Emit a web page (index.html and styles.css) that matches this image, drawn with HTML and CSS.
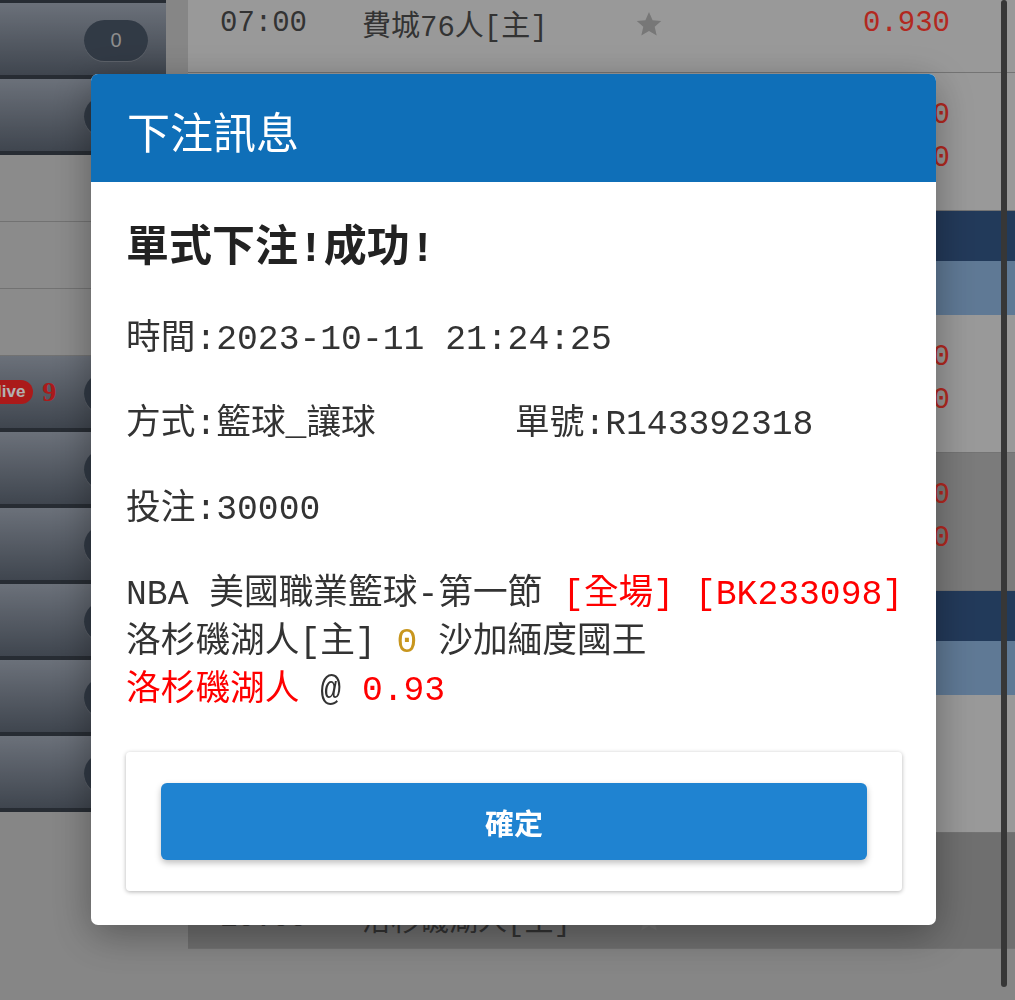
FILE: index.html
```html
<!DOCTYPE html>
<html lang="zh-Hant">
<head>
<meta charset="utf-8">
<title>下注訊息</title>
<link rel="stylesheet" href="styles.css">
</head>
<body>
<div class="page">
  <aside class="sidebar">
    <div class="side-item"><span class="count">0</span></div>
    <div class="side-item"><span class="count">0</span></div>
    <div class="side-plain"></div>
    <div class="side-plain"></div>
    <div class="side-plain"></div>
    <div class="side-item live-row"><span class="live-wrap"><span class="live">live</span><span class="live-num">9</span></span><span class="count">0</span></div>
    <div class="side-item"><span class="count">0</span></div>
    <div class="side-item"><span class="count">0</span></div>
    <div class="side-item"><span class="count">0</span></div>
    <div class="side-item"><span class="count">0</span></div>
    <div class="side-item"><span class="count">0</span></div>
  </aside>

  <main class="content">
    <div class="match partial">
      <div class="line"><span class="time">07:00</span><span class="team">費城76人[主]</span><svg class="star" viewBox="0 0 24 24"><path d="M12 1.8l3.1 6.9 7.4.7-5.6 5 1.7 7.4L12 17.9 5.4 21.8l1.7-7.4-5.6-5 7.4-.7z"/></svg><span class="odds">0.930</span></div>
    </div>
    <div class="match">
      <div class="line"><span class="time">07:00</span><span class="team">邁阿密熱火</span><svg class="star" viewBox="0 0 24 24"><path d="M12 1.8l3.1 6.9 7.4.7-5.6 5 1.7 7.4L12 17.9 5.4 21.8l1.7-7.4-5.6-5 7.4-.7z"/></svg><span class="odds">0.910</span></div>
      <div class="line"><span class="time">07:00</span><span class="team">費城76人[主]</span><svg class="star" viewBox="0 0 24 24"><path d="M12 1.8l3.1 6.9 7.4.7-5.6 5 1.7 7.4L12 17.9 5.4 21.8l1.7-7.4-5.6-5 7.4-.7z"/></svg><span class="odds">0.930</span></div>
    </div>
    <div class="league"></div>
    <div class="league-sub"></div>
    <div class="match">
      <div class="line"><span class="time">10:00</span><span class="team">沙加緬度國王</span><svg class="star" viewBox="0 0 24 24"><path d="M12 1.8l3.1 6.9 7.4.7-5.6 5 1.7 7.4L12 17.9 5.4 21.8l1.7-7.4-5.6-5 7.4-.7z"/></svg><span class="odds">0.930</span></div>
      <div class="line"><span class="time">10:00</span><span class="team">洛杉磯湖人[主]</span><svg class="star" viewBox="0 0 24 24"><path d="M12 1.8l3.1 6.9 7.4.7-5.6 5 1.7 7.4L12 17.9 5.4 21.8l1.7-7.4-5.6-5 7.4-.7z"/></svg><span class="odds">0.930</span></div>
    </div>
    <div class="match alt">
      <div class="line"><span class="time">10:00</span><span class="team">沙加緬度國王</span><svg class="star" viewBox="0 0 24 24"><path d="M12 1.8l3.1 6.9 7.4.7-5.6 5 1.7 7.4L12 17.9 5.4 21.8l1.7-7.4-5.6-5 7.4-.7z"/></svg><span class="odds">0.910</span></div>
      <div class="line"><span class="time">10:00</span><span class="team">洛杉磯湖人[主]</span><svg class="star" viewBox="0 0 24 24"><path d="M12 1.8l3.1 6.9 7.4.7-5.6 5 1.7 7.4L12 17.9 5.4 21.8l1.7-7.4-5.6-5 7.4-.7z"/></svg><span class="odds">0.930</span></div>
    </div>
    <div class="league"></div>
    <div class="league-sub"></div>
    <div class="match">
      <div class="line"><span class="time">10:00</span><span class="team">沙加緬度國王</span><svg class="star" viewBox="0 0 24 24"><path d="M12 1.8l3.1 6.9 7.4.7-5.6 5 1.7 7.4L12 17.9 5.4 21.8l1.7-7.4-5.6-5 7.4-.7z"/></svg><span class="odds"></span></div>
      <div class="line"><span class="time">10:00</span><span class="team">洛杉磯湖人[主]</span><svg class="star" viewBox="0 0 24 24"><path d="M12 1.8l3.1 6.9 7.4.7-5.6 5 1.7 7.4L12 17.9 5.4 21.8l1.7-7.4-5.6-5 7.4-.7z"/></svg><span class="odds"></span></div>
    </div>
    <div class="match sel">
      <div class="line"><span class="time">10:00</span><span class="team">沙加緬度國王</span><svg class="star" viewBox="0 0 24 24"><path d="M12 1.8l3.1 6.9 7.4.7-5.6 5 1.7 7.4L12 17.9 5.4 21.8l1.7-7.4-5.6-5 7.4-.7z"/></svg><span class="odds"></span></div>
      <div class="line"><span class="time">10:00</span><span class="team">洛杉磯湖人[主]</span><svg class="star" viewBox="0 0 24 24"><path d="M12 1.8l3.1 6.9 7.4.7-5.6 5 1.7 7.4L12 17.9 5.4 21.8l1.7-7.4-5.6-5 7.4-.7z"/></svg><span class="odds"></span></div>
    </div>
  </main>
  <div class="scrollbar"></div>
</div>

<div class="backdrop"></div>

<div class="modal">
  <div class="modal-header">下注訊息</div>
  <div class="modal-body">
    <h2 class="result-title">單式下注!成功!</h2>
    <p class="info">時間:2023-10-11 21:24:25</p>
    <p class="info"><span class="info-col">方式:籃球_讓球</span>單號:R143392318</p>
    <p class="info">投注:30000</p>
    <p class="info">NBA 美國職業籃球-第一節 <span class="red">[全場]</span> <span class="red">[BK233098]</span><br>洛杉磯湖人[主] <span class="gold">0</span> 沙加緬度國王<br><span class="red">洛杉磯湖人</span> @ <span class="red">0.93</span></p>
    <div class="action-card">
      <button class="confirm" type="button">確定</button>
    </div>
  </div>
</div>
</body>
</html>
```

FILE: styles.css
```css
* { box-sizing: border-box; }

html, body {
  margin: 0;
  padding: 0;
}

body {
  width: 1015px;
  height: 1000px;
  overflow: hidden;
  background: #c0c0c0;
  font-family: "Liberation Mono", "Noto Sans CJK TC", monospace;
}

.page {
  position: relative;
  display: flex;
  gap: 22px;
  height: 1000px;
  overflow: hidden;
}

/* ---------- sidebar ---------- */
.sidebar {
  width: 166px;
  flex: none;
  display: flex;
  flex-direction: column;
  border-top: 3px solid #39404a;
}

.side-item {
  height: 76px;
  flex: none;
  display: flex;
  align-items: center;
  justify-content: flex-end;
  padding-right: 18px;
  background: linear-gradient(#9aa2af, #5b6471);
  border-bottom: 4px solid #39404a;
  overflow: hidden;
}

.side-plain {
  height: 67px;
  flex: none;
  background: #c8c8c8;
  border-bottom: 1px solid #a4a4a4;
}

.count {
  width: 64px;
  height: 41px;
  margin-top: 3px;
  border-radius: 21px;
  background: #475363;
  color: #cbcbcb;
  font: 20px "Liberation Sans", sans-serif;
  display: flex;
  align-items: center;
  justify-content: center;
  box-shadow: 0 1px 0 rgba(255, 255, 255, 0.2);
}

.live-row { justify-content: space-between; }

.live-wrap {
  display: flex;
  align-items: center;
  gap: 9px;
  margin-left: -11px;
}

.live {
  height: 24px;
  padding: 0 8px;
  border-radius: 12px;
  background: #f52626;
  color: #fff;
  font: bold 17px/24px "Liberation Sans", sans-serif;
}

.live-num {
  color: #f52626;
  font: bold 28px "Liberation Serif", serif;
}

/* ---------- match list ---------- */
.content {
  flex: 1;
  min-width: 0;
  display: flex;
  flex-direction: column;
}

.match {
  flex: none;
  background: #dcdcdc;
  padding: 21px 0 30px;
  border-bottom: 1px solid #a6a6a6;
}

.match.partial { padding-top: 2px; padding-bottom: 27px; }
.match.alt { background: #b0b0b0; }
.match.sel { background: #a0a0a0; padding-bottom: 8px; }

.league {
  flex: none;
  height: 50px;
  background: #325381;
}

.league-sub {
  flex: none;
  height: 54px;
  background: #89aed6;
}

.line {
  display: grid;
  grid-template-columns: 142px 273px 1fr auto;
  align-items: center;
  height: 43px;
  padding: 0 65px 0 32px;
  font-size: 29px;
  color: #494949;
  white-space: nowrap;
}

.star {
  width: 28px;
  height: 28px;
  display: block;
  fill: #ababab;
}

.odds { color: #ff3a2e; }

.scrollbar {
  position: absolute;
  left: 1001px;
  top: 0;
  width: 6px;
  height: 987px;
  border-radius: 3px;
  background: #4f4f4f;
}

/* ---------- modal ---------- */
.backdrop {
  position: fixed;
  inset: 0;
  background: rgba(0, 0, 0, 0.3);
}

.modal {
  position: fixed;
  left: 91px;
  top: 74px;
  width: 845px;
  background: #fff;
  border-radius: 7px;
  overflow: hidden;
  box-shadow: 0 10px 40px rgba(0, 0, 0, 0.35);
}

.modal-header {
  height: 108px;
  padding: 4px 36px 0;
  background: #0f6fb8;
  color: #fff;
  font-family: "Noto Sans CJK TC", sans-serif;
  font-weight: 400;
  font-size: 43px;
  line-height: 104px;
}

.modal-body {
  padding: 43px 34px 34px 35px;
  color: #333;
}

.result-title {
  margin: 0 0 41px;
  font-size: 43px;
  line-height: 50px;
  font-weight: bold;
  color: #222;
}

.info {
  margin: 0 0 37px;
  font-size: 34.7px;
  line-height: 48px;
  white-space: nowrap;
}

.info-col {
  display: inline-block;
  width: 389px;
}

.red { color: #ff0000; }
.gold { color: #c8961e; }

.action-card {
  padding: 31px 35px;
  border-radius: 4px;
  background: #fff;
  box-shadow: 0 1px 4px rgba(0, 0, 0, 0.3);
}

.confirm {
  display: block;
  width: 100%;
  height: 77px;
  border: 0;
  border-radius: 6px;
  background: #1f83d1;
  color: #fff;
  font-family: "Noto Sans CJK TC", sans-serif;
  font-weight: bold;
  font-size: 29px;
  box-shadow: 0 3px 6px rgba(0, 0, 0, 0.25);
}
```
